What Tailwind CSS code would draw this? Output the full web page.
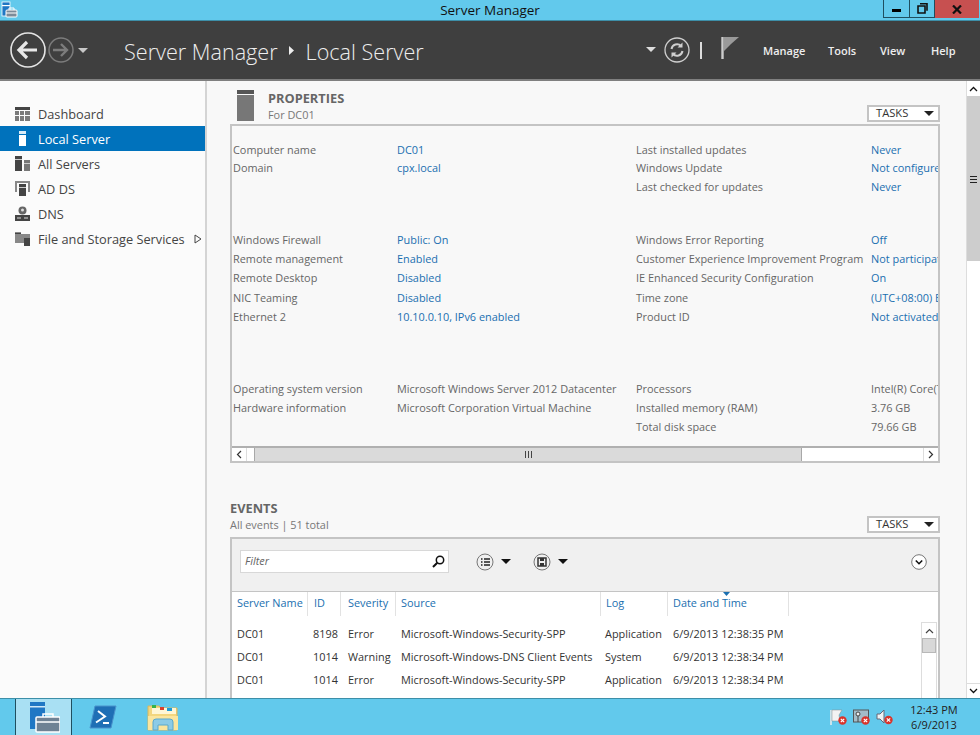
<!DOCTYPE html>
<html lang="en">
<head>
  <meta charset="UTF-8" />
  <title>Server Manager</title>
  <script src="https://cdn.jsdelivr.net/npm/@tailwindcss/browser@4"></script>
</head>
<body class="bg-white">
<div class="w-[980px] h-[735px] flex flex-col overflow-hidden font-['Open_Sans',sans-serif] text-[10.9px] text-[#666]">

  <!-- Title bar -->
  <div class="h-[21px] shrink-0 relative flex justify-center bg-[#62c9ec] border-b border-[#3d8fa8] text-[13.5px] leading-[20px] text-[#111]">
    <svg class="absolute left-[1px] top-[1px]" width="17" height="17" viewBox="0 0 17 17">
      <rect x="1" y="1" width="8" height="14" fill="#1f77c4" stroke="#fff" stroke-width=".8"/>
      <rect x="1" y="4" width="8" height="1.2" fill="#fff"/>
      <rect x="5" y="9" width="11" height="7" rx="1" fill="#7d8b99" stroke="#fff"/>
      <path d="M8 9V7h5v2M5 12h11" fill="none" stroke="#fff"/>
    </svg>
    <span>Server Manager</span>
    <div class="absolute right-[1px] top-0 h-[18px] flex">
      <div class="w-[27px] border border-t-0 border-[#1f4f60] flex items-center justify-center"><span class="block w-[9px] h-[3px] mt-[3px] bg-black"></span></div>
      <div class="w-[25px] border border-t-0 border-l-0 border-[#1f4f60] flex items-center justify-center">
        <svg width="11" height="11" viewBox="0 0 11 11"><path d="M3 .8h7v7M1 3h7v7H1z" fill="none" stroke="#111" stroke-width="1.6"/></svg>
      </div>
      <div class="w-[44px] bg-[#c75050] flex items-center justify-center">
        <svg width="10" height="9" viewBox="0 0 10 9"><path d="M1 .5l8 8M9 .5l-8 8" stroke="#111" stroke-width="2.2"/></svg>
      </div>
    </div>
  </div>

  <!-- Header -->
  <div class="h-[60px] shrink-0 flex items-center bg-[#3f3f3f] border-b-2 border-[#7f7f7f] text-white relative">
    <svg class="ml-[10px] shrink-0" width="80" height="38" viewBox="0 0 80 38">
      <circle cx="18" cy="19" r="17" fill="none" stroke="#e4e4e4" stroke-width="1.6"/>
      <path d="M27 19H10M17 11l-8 8 8 8" fill="none" stroke="#e8e8e8" stroke-width="3.2"/>
      <circle cx="51" cy="19" r="12" fill="none" stroke="#7c7c7c" stroke-width="1.5"/>
      <path d="M43 19h14M51 13l6 6-6 6" fill="none" stroke="#7c7c7c" stroke-width="2.4"/>
      <path d="M68 17h10l-5 5z" fill="#c8c8c8"/>
    </svg>
    <div class="ml-[34px] mt-[3px] flex items-center text-[21.6px] font-light leading-none text-[#eee]">
      <span>Server Manager</span>
      <svg class="ml-[10px] mr-[11px] mb-[3px]" width="7" height="9" viewBox="0 0 7 9"><path d="M1 0l5 4.5L1 9z" fill="#eee"/></svg>
      <span>Local Server</span>
    </div>
    <div class="ml-auto flex items-center">
      <svg width="10" height="6" viewBox="0 0 10 6"><path d="M0 0h10L5 5z" fill="#ddd"/></svg>
      <svg class="ml-[8px]" width="26" height="26" viewBox="0 0 26 26">
        <circle cx="13" cy="13" r="12" fill="none" stroke="#cfcfcf" stroke-width="1.3"/>
        <path d="M7.5 12a5.600 5.600 0 0 1 9.600-3M18.500 14a5.600 5.600 0 0 1-9.600 3" fill="none" stroke="#cfcfcf" stroke-width="2"/>
        <path d="M18.500 5.500v5h-5zM7.500 20.500v-5h5z" fill="#cfcfcf"/>
      </svg>
      <span class="ml-[10px] w-[2px] h-[17px] bg-[#ddd]"></span>
      <svg class="ml-[19px] mb-[4px]" width="18" height="24" viewBox="0 0 18 24"><path d="M1.500 1v22" stroke="#ccc" stroke-width="2.400"/><path d="M3 1h15L10 8l-7 7z" fill="#9a9a9a"/></svg>
      <nav class="flex text-[11px] font-semibold ml-[24px] mr-[25px] mt-[2px] text-[#eee]">
        <span class="w-[65px]">Manage</span><span class="w-[52px]">Tools</span><span class="w-[51px]">View</span><span class="w-[24px]">Help</span>
      </nav>
    </div>
  </div>

  <div class="flex-1 min-h-0 flex">
    <!-- Sidebar -->
    <aside class="w-[207px] shrink-0 bg-[#fbfbfb] border-r-2 border-[#d4d4d4] pt-[20px] text-[12.75px] text-[#444]">
      <div class="h-[25px] flex items-center pl-[15px] gap-[8px]">
        <svg width="15" height="14" viewBox="0 0 15 14"><path d="M0 0h15v3H0z" fill="#444"/><path d="M0 4h4v4H0zM5 4h4v4H5zM10 4h5v4h-5zM0 9h4v5H0zM5 9h4v5H5zM10 9h5v5h-5z" fill="#7a7a7a"/></svg>
        <span class="pt-[2px]">Dashboard</span>
      </div>
      <div class="h-[25px] flex items-center pl-[15px] gap-[8px] bg-[#0072bc] text-white">
        <svg width="15" height="15" viewBox="0 0 15 15"><path d="M4 0h7v3H4z" fill="#d9ecf7"/><path d="M4 4h7v11H4z" fill="#fff"/></svg>
        <span class="pt-[2px]">Local Server</span>
      </div>
      <div class="h-[25px] flex items-center pl-[15px] gap-[8px]">
        <svg width="15" height="15" viewBox="0 0 15 15"><path d="M0 0h7v15H0z" fill="#444"/><path d="M0 3h7v1H0z" fill="#ccc"/><path d="M9 4h6v11H9z" fill="#777"/><path d="M9 7h6v1H9z" fill="#ccc"/></svg>
        <span class="pt-[2px]">All Servers</span>
      </div>
      <div class="h-[25px] flex items-center pl-[15px] gap-[8px]">
        <svg width="15" height="15" viewBox="0 0 15 15"><path d="M0 0h15v2H0zM0 2h2v9H0zM13 2h2v9h-2z" fill="#888"/><path d="M4 3h7v12H4z" fill="#444"/><path d="M4 6h7v1H4z" fill="#ccc"/></svg>
        <span class="pt-[2px]">AD DS</span>
      </div>
      <div class="h-[25px] flex items-center pl-[15px] gap-[8px]">
        <svg width="15" height="15" viewBox="0 0 15 15"><circle cx="7.500" cy="4.500" r="4" fill="#666"/><circle cx="7.500" cy="4" r="1.500" fill="#ddd"/><path d="M0 9h15v6H0z" fill="#444"/><path d="M2 11.500h4v1H2zM9 11.500h4v1H9z" fill="#ddd"/></svg>
        <span class="pt-[2px]">DNS</span>
      </div>
      <div class="h-[25px] flex items-center pl-[15px] gap-[8px]">
        <svg width="15" height="15" viewBox="0 0 15 15"><path d="M0 1h6v2h9v9H0z" fill="#888"/><path d="M0 2h6v1H0z" fill="#444"/><path d="M9 7h6v8H9z" fill="#444"/></svg>
        <span class="pt-[2px]">File and Storage Services</span>
        <svg class="ml-[1px]" width="8" height="10" viewBox="0 0 8 10"><path d="M1 1l6 4-6 4z" fill="none" stroke="#444"/></svg>
      </div>
    </aside>

    <!-- Main content -->
    <main class="flex-1 min-w-0 bg-[#f8f8f8] overflow-hidden">
      <div class="pl-[23px] pr-[26px]">
        <!-- Properties -->
        <div class="h-[43px] flex pt-[9px]">
          <svg class="ml-[7px]" width="17" height="31" viewBox="0 0 17 31"><path d="M0 0h17v4H0z" fill="#555"/><path d="M0 5h17v26H0z" fill="#777"/></svg>
          <div class="ml-[14px] leading-[16px]">
            <div class="text-[12.8px] font-bold text-[#666]">PROPERTIES</div>
            <div class="mt-[1px] text-[#777]">For DC01</div>
          </div>
          <div class="ml-auto mt-[15px] w-[73px] h-[17px] border-2 border-[#c4c4c4] bg-white flex items-center justify-between pl-[7px] pr-[4px] text-[11.2px] text-[#333]">
            TASKS
            <svg width="10" height="6" viewBox="0 0 10 6"><path d="M0 0h10L5 5z" fill="#222"/></svg>
          </div>
        </div>

        <div class="h-[339px] border-2 border-[#c4c4c4] flex flex-col">
          <div class="flex-1 min-h-0 overflow-hidden pl-[1px] whitespace-nowrap">
            <div class="h-[90px] pt-[14.5px] grid grid-cols-[164px_239px_235px_1fr] auto-rows-[18.5px] items-center">
              <span>Computer name</span><span class="text-[#1a6fb0]">DC01</span><span>Last installed updates</span><span class="text-[#1a6fb0]">Never</span>
              <span>Domain</span><span class="text-[#1a6fb0]">cpx.local</span><span>Windows Update</span><span class="text-[#1a6fb0]">Not configured</span>
              <span></span><span></span><span>Last checked for updates</span><span class="text-[#1a6fb0]">Never</span>
            </div>
            <div class="h-[149px] pt-[14.5px] grid grid-cols-[164px_239px_235px_1fr] auto-rows-[19.25px] items-center">
              <span>Windows Firewall</span><span class="text-[#1a6fb0]">Public: On</span><span>Windows Error Reporting</span><span class="text-[#1a6fb0]">Off</span>
              <span>Remote management</span><span class="text-[#1a6fb0]">Enabled</span><span>Customer Experience Improvement Program</span><span class="text-[#1a6fb0]">Not participating</span>
              <span>Remote Desktop</span><span class="text-[#1a6fb0]">Disabled</span><span>IE Enhanced Security Configuration</span><span class="text-[#1a6fb0]">On</span>
              <span>NIC Teaming</span><span class="text-[#1a6fb0]">Disabled</span><span>Time zone</span><span class="text-[#1a6fb0]">(UTC+08:00) Beijing</span>
              <span>Ethernet 2</span><span class="text-[#1a6fb0]">10.10.0.10, IPv6 enabled</span><span>Product ID</span><span class="text-[#1a6fb0]">Not activated</span>
            </div>
            <div class="pt-[14.5px] grid grid-cols-[164px_239px_235px_1fr] auto-rows-[19px] items-center">
              <span>Operating system version</span><span>Microsoft Windows Server 2012 Datacenter</span><span>Processors</span><span>Intel(R) Core(TM) i7</span>
              <span>Hardware information</span><span>Microsoft Corporation Virtual Machine</span><span>Installed memory (RAM)</span><span>3.76 GB</span>
              <span></span><span></span><span>Total disk space</span><span>79.66 GB</span>
            </div>
          </div>
          <!-- Horizontal scrollbar -->
          <div class="h-[15px] shrink-0 border-t-2 border-[#b0b0b0] bg-white flex items-stretch">
            <div class="w-[15px] flex items-center justify-center border-r border-[#ddd]">
              <svg width="6" height="9" viewBox="0 0 6 9"><path d="M5 1L1.500 4.500 5 8" fill="none" stroke="#333" stroke-width="1.200"/></svg>
            </div>
            <div class="w-[7px]"></div>
            <div class="w-[548px] bg-[#dadada] border-x border-[#a8a8a8] flex items-center justify-center">
              <span class="w-[7px] h-[7px] border-x-[1.500px] border-[#444] bg-[linear-gradient(90deg,transparent_35%,#444_35%,#444_65%,transparent_65%)]"></span>
            </div>
            <div class="flex-1"></div>
            <div class="w-[15px] flex items-center justify-center border-l border-[#ddd]">
              <svg width="6" height="9" viewBox="0 0 6 9"><path d="M1 1l3.500 3.500L1 8" fill="none" stroke="#333" stroke-width="1.200"/></svg>
            </div>
          </div>
        </div>

        <!-- Events -->
        <div class="h-[74px] flex pt-[37px]">
          <div class="leading-[16px]">
            <div class="text-[12.8px] font-bold text-[#666]">EVENTS</div>
            <div class="mt-[1px] text-[#777]">All events | 51 total</div>
          </div>
          <div class="ml-auto mt-[16px] w-[73px] h-[17px] border-2 border-[#c4c4c4] bg-white flex items-center justify-between pl-[7px] pr-[4px] text-[11.2px] text-[#333]">
            TASKS
            <svg width="10" height="6" viewBox="0 0 10 6"><path d="M0 0h10L5 5z" fill="#222"/></svg>
          </div>
        </div>

        <div class="h-[170px] border-2 border-b-0 border-[#c4c4c4] bg-white flex flex-col">
          <div class="h-[53px] shrink-0 bg-[#f0f0f0] border-b border-[#c4c4c4] flex items-start pt-[11px] pl-[8px] pr-[11px]">
            <div class="w-[209px] h-[23px] bg-white border border-[#d8d8d8] flex items-center justify-between pl-[4px] pr-[3px] italic text-[#666]">
              Filter
              <svg width="13" height="13" viewBox="0 0 13 13"><circle cx="8" cy="5" r="3.700" fill="none" stroke="#111" stroke-width="1.500"/><path d="M5.300 7.700L1 12" stroke="#111" stroke-width="2"/></svg>
            </div>
            <svg class="ml-[27px] mt-[3px]" width="40" height="18" viewBox="0 0 40 18">
              <circle cx="9" cy="9" r="8" fill="none" stroke="#777"/>
              <path d="M5 6h1.500M8 6h6M5 9h1.500M8 9h6M5 12h1.500M8 12h6" stroke="#222" stroke-width="1.400"/>
              <path d="M25 6h10l-5 5z" fill="#111"/>
            </svg>
            <svg class="ml-[17px] mt-[3px]" width="40" height="18" viewBox="0 0 40 18">
              <circle cx="9" cy="9" r="8" fill="none" stroke="#777"/>
              <path d="M5 5h8v8H5z" fill="none" stroke="#333" stroke-width="1.500"/><path d="M7 5h4v3H7zM7 10h4v3H7z" fill="#333"/>
              <path d="M25 6h10l-5 5z" fill="#111"/>
            </svg>
            <svg class="ml-auto mt-[4px]" width="16" height="16" viewBox="0 0 16 16"><circle cx="8" cy="8" r="7.300" fill="#fff" stroke="#777"/><path d="M4.800 6.500L8 9.700l3.200-3.200" fill="none" stroke="#111" stroke-width="1.600"/></svg>
          </div>
          <!-- Column headers -->
          <div class="h-[24px] shrink-0 flex text-[#1a6fb0] leading-[21px] whitespace-nowrap">
            <div class="w-[76px] pl-[5px] border-r border-[#e2e2e2]">Server Name</div>
            <div class="w-[33px] pl-[6px] border-r border-[#e2e2e2]">ID</div>
            <div class="w-[55px] pl-[7px] border-r border-[#e2e2e2]">Severity</div>
            <div class="w-[205px] pl-[5px] border-r border-[#e2e2e2]">Source</div>
            <div class="w-[67px] pl-[5px] border-r border-[#e2e2e2]">Log</div>
            <div class="w-[121px] pl-[5px] border-r border-[#e2e2e2] relative">
              <svg class="absolute left-[55px] top-0" width="7" height="4" viewBox="0 0 7 4"><path d="M0 0h7L3.500 4z" fill="#1a6fb0"/></svg>
              Date and Time
            </div>
          </div>
          <!-- Rows -->
          <div class="flex-1 min-h-0 flex">
            <div class="flex-1 pt-[7px] text-[#333] whitespace-nowrap">
              <div class="h-[23px] flex items-center"><span class="w-[76px] pl-[5px]">DC01</span><span class="w-[35px] pl-[5px]">8198</span><span class="w-[53px] pl-[5px]">Error</span><span class="w-[204px] pl-[5px]">Microsoft-Windows-Security-SPP</span><span class="w-[73px] pl-[5px]">Application</span><span>6/9/2013 12:38:35 PM</span></div>
              <div class="h-[23px] flex items-center"><span class="w-[76px] pl-[5px]">DC01</span><span class="w-[35px] pl-[5px]">1014</span><span class="w-[53px] pl-[5px]">Warning</span><span class="w-[204px] pl-[5px]">Microsoft-Windows-DNS Client Events</span><span class="w-[73px] pl-[5px]">System</span><span>6/9/2013 12:38:34 PM</span></div>
              <div class="h-[23px] flex items-center"><span class="w-[76px] pl-[5px]">DC01</span><span class="w-[35px] pl-[5px]">1014</span><span class="w-[53px] pl-[5px]">Error</span><span class="w-[204px] pl-[5px]">Microsoft-Windows-Security-SPP</span><span class="w-[73px] pl-[5px]">Application</span><span>6/9/2013 12:38:34 PM</span></div>
            </div>
            <div class="w-[16px] mt-[6px] shrink-0 border-x border-t border-[#ddd] mr-[1px]">
              <div class="h-[15px] flex items-center justify-center">
                <svg width="9" height="6" viewBox="0 0 9 6"><path d="M1 5l3.500-3.500L8 5" fill="none" stroke="#444" stroke-width="1.200"/></svg>
              </div>
              <div class="h-[15px] bg-[#d8d8d8] border border-[#b8b8b8]"></div>
            </div>
          </div>
        </div>
      </div>
    </main>

    <!-- Page scrollbar -->
    <div class="w-[14px] shrink-0 bg-white border-l border-[#ddd] flex flex-col">
      <div class="h-[15px] flex items-center justify-center">
        <svg width="9" height="6" viewBox="0 0 9 6"><path d="M1 5l3.500-3.500L8 5" fill="none" stroke="#111" stroke-width="1.300"/></svg>
      </div>
      <div class="h-[165px] bg-[#cdcdcd] flex items-center justify-center">
        <span class="block w-[7px] h-[7px] mt-[2px] border-y-[1.500px] border-[#222] bg-[linear-gradient(180deg,transparent_35%,#222_35%,#222_65%,transparent_65%)]"></span>
      </div>
      <div class="flex-1"></div>
      <div class="h-[15px] flex items-center justify-center border-t border-[#ddd]">
        <svg width="9" height="6" viewBox="0 0 9 6"><path d="M1 1l3.500 3.500L8 1" fill="none" stroke="#111" stroke-width="1.300"/></svg>
      </div>
    </div>
  </div>

  <!-- Taskbar -->
  <div class="h-[37px] shrink-0 bg-[#62c9ec] border-t border-[#3d8fa8] flex items-stretch relative">
    <div class="ml-[15px] w-[57px] bg-[#a9e0f3] border-x border-[#1f4f60] flex items-center justify-center">
      <svg width="32" height="32" viewBox="0 0 32 32">
        <rect x="2" y="1" width="15" height="27" fill="#1f77c4"/>
        <rect x="2" y="5" width="15" height="1.500" fill="#cfe8f7"/>
        <rect x="8" y="16" width="24" height="15" rx="1" fill="#6f8294" stroke="#fff" stroke-width="1.500"/>
        <path d="M15 16v-3h10v3M8 21h24" fill="none" stroke="#fff" stroke-width="1.500"/>
      </svg>
    </div>
    <div class="ml-[9px] w-[44px] flex items-center justify-center">
      <svg width="28" height="24" viewBox="0 0 28 24">
        <path d="M6 1h21l-5 22H1z" fill="#1f6fb5" stroke="#4a93cc"/>
        <path d="M9 6l7 5.500-9 6M14 18h6" fill="none" stroke="#fff" stroke-width="2"/>
      </svg>
    </div>
    <div class="ml-[22px] w-[32px] flex items-center justify-center">
      <svg width="32" height="30" viewBox="0 0 32 30">
        <path d="M1 4h11l2 2h16v22H1z" fill="#f3d67e" stroke="#d8b65c"/>
        <path d="M5 6h24v6H5z" fill="#fff6d5"/>
        <path d="M5 3h4v3H5z" fill="#37b34a"/><path d="M13 5h4v3h-4z" fill="#d9402c"/><path d="M20 6h5v3h-5z" fill="#1d9bd8"/>
        <path d="M1 14h30v14H1z" fill="#fbe59e"/>
        <path d="M6 28v-8a3 3 0 0 1 3-3h14a3 3 0 0 1 3 3v8h-5v-5H11v5z" fill="#8ccbe6" stroke="#5aa8cc"/>
      </svg>
    </div>

    <div class="ml-auto flex items-center pr-[21px]">
      <svg width="17" height="16" viewBox="0 0 17 16"><path d="M1 1v15" stroke="#eee" stroke-width="1.500"/><path d="M2 1h10l-3 5 1 6H2z" fill="#f3f3f3" stroke="#888" stroke-width=".5"/><circle cx="12.500" cy="11.500" r="4.200" fill="#d9342b"/><path d="M10.800 9.800l3.400 3.400M14.200 9.800l-3.400 3.400" stroke="#fff" stroke-width="1.200"/></svg>
      <svg class="ml-[6px]" width="17" height="16" viewBox="0 0 17 16"><rect x=".5" y="1" width="15" height="12" fill="#a3bcc8" stroke="#555"/><circle cx="5" cy="5" r="2" fill="#eee" stroke="#444"/><path d="M5 7v6" stroke="#444"/><circle cx="12.500" cy="11.500" r="4.200" fill="#d9342b"/><path d="M10.800 9.800l3.400 3.400M14.200 9.800l-3.400 3.400" stroke="#fff" stroke-width="1.200"/></svg>
      <svg class="ml-[6px]" width="17" height="16" viewBox="0 0 17 16"><path d="M1 5h3l4-4v13l-4-4H1z" fill="#eef3f5" stroke="#667"/><circle cx="12.500" cy="11" r="4.200" fill="#d9342b"/><path d="M10.800 9.300l3.400 3.400M14.200 9.300l-3.400 3.400" stroke="#fff" stroke-width="1.200"/></svg>
      <div class="ml-[16px] w-[50px] text-center text-[11px] leading-[15px] text-[#222]">
        <div class="whitespace-nowrap">12:43 PM</div>
        <div>6/9/2013</div>
      </div>
    </div>
  </div>
</div>
</body>
</html>
